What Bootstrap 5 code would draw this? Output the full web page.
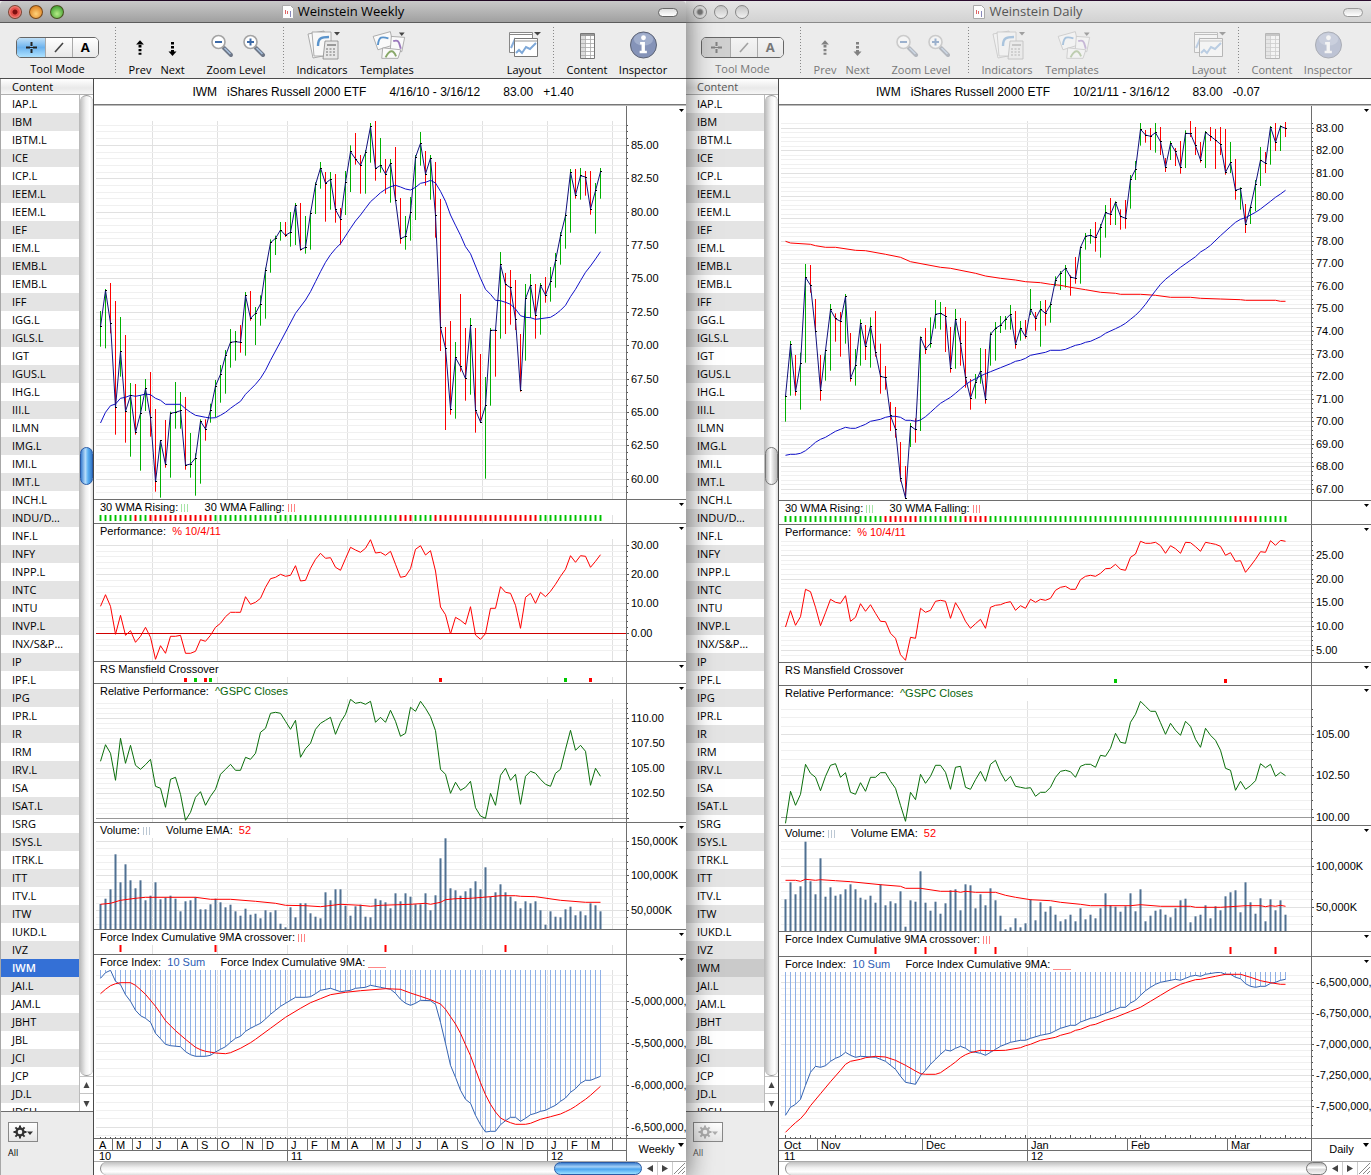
<!DOCTYPE html>
<html lang="en">
<head>
<meta charset="utf-8">
<meta name="viewport" content="width=device-width, initial-scale=1">
<title>Weinstein Weekly / Weinstein Daily</title>
<link href="https://cdn.jsdelivr.net/npm/bootstrap@5.3.0/dist/css/bootstrap.min.css" rel="stylesheet">
<style>
  :root { --ui: "Open Sans", "Noto Sans", sans-serif; --plot: "Liberation Sans", Arial, sans-serif; --rule: #6e6e6e; }
  body { font: 11px/15px var(--ui); color: #000; background: #2a0a2e; }
  .desk { height: 100vh; min-height: 1175px; padding-top: 1px; }
  .win { flex: 1 1 0; min-width: 0; background: #ececec; position: relative; z-index: 2; }
  .win-front { box-shadow: 0 4px 26px rgba(0,0,0,.6); }
  .win-back { margin-left: -1px; z-index: 1; overflow: hidden; }
  .titlebar { height: 22px; border-bottom: 1px solid #5c5c5c; background: linear-gradient(#c9c9c9, #a0a0a0); font-size: 13px; border-radius: 4px 4px 0 0; }
  .win-back .titlebar { background: linear-gradient(#e6e6e6, #d2d2d2); border-color: #8a8a8a; color: #555; }
  .lights { position: absolute; left: 8px; top: 4px; gap: 7px; }
  .lights i { width: 14px; height: 14px; border-radius: 50%; border: 1px solid rgba(60,30,10,.65); }
  .l-red { background: radial-gradient(circle, #7c0f0f 0 2px, #e4504a 3px 4px, #ffb0a4 7px); }
  .l-amber { background: radial-gradient(circle at 50% 65%, #ffd27a, #e08a2c 70%); }
  .l-green { background: radial-gradient(circle at 50% 65%, #b6ec86, #4fa83c 70%); }
  .win-back .lights i { background: linear-gradient(#c4c4c4, #f0f0f0); border-color: #888; }
  .win-back .lights .l-red { background: radial-gradient(circle, #777 0 2px, #dcdcdc 4px); }
  .pill { position: absolute; right: 8px; top: 7px; width: 20px; height: 9px; border: 1px solid #666; border-radius: 5px; background: linear-gradient(#ddd, #fff); padding: 0; }
  .win-back .pill { border-color: #999; }
  .tools { height: 56px; border-bottom: 1px solid #4c4c4c; font-size: 11px; }
  .win-back .tools { color: #777; }
  .win-back .tools svg { opacity: .45; }
  .tool { border: 0; background: none; padding: 0; color: inherit; line-height: 15px; text-align: center; white-space: nowrap; }
  .tool svg { display: block; margin: 4px auto 0; height: 34px; }
  .dots { width: 1px; margin: 4px 0 3px; background: repeating-linear-gradient(#888 0 1px, transparent 1px 3px); }
  .modes { margin: 14px 0 3px; border: 1px solid #666; border-radius: 5px; overflow: hidden; height: 21px; }
  .modes button { flex: 1; border: 0; border-left: 1px solid #aaa; background: linear-gradient(#fff, #e8e8e8); padding: 0; color: inherit; font-size: 13px; line-height: 19px; }
  .modes button:first-child { border-left: 0; background: linear-gradient(#bfe0f8, #6db3ee 50%, #aee2ff); }
  .win-back .modes button { background: linear-gradient(#f4f4f4, #e8e8e8); }
  .win-back .modes button:first-child { background: #d0d0d0; }
  .modes svg { display: block; height: 19px; margin: 0 auto; }
  .side { flex: 0 0 94px; border-right: 1px solid #4a4a4a; border-left: 1px solid #a8a8a8; }
  .side-head { height: 16px; border-bottom: 1px solid #b0b0b0; background: linear-gradient(#fff, #e9e9e9 60%, #f6f6f6); padding-left: 11px; }
  .win-back .side-head { color: #555; }
  .names { background: #fff; overflow: hidden; }
  .names .list-group-item { border: 0; border-radius: 0; background: transparent; color: #000; padding: 0 0 0 11px; height: 18px; line-height: 18px; white-space: nowrap; flex: none; }
  .names .list-group-item:nth-child(even) { background: #e4e4e4; }
  .names .list-group-item.active { background: #3470d6; color: #fff; font-weight: 600; margin: 0; }
  .win-back .names .list-group-item.active { background: #cacaca; color: #000; font-weight: 400; }
  .vbar { flex: 0 0 14px; border-left: 1px solid #bbb; background: #fff; }
  .vtrack { border-radius: 7px; background: linear-gradient(90deg, #bcbcbc, #f0f0f0 45%, #fff 75%, #ddd); border: solid #999; border-width: 1px 0; }
  .knob { border-radius: 7px; background: linear-gradient(90deg, #3c7fd0, #b5dcfb 40%, #57aef2 65%, #3578c8); border: 1px solid #2a5ba6; }
  .win-back .knob { background: linear-gradient(90deg, #b5b5b5, #fff 40%, #dedede 65%, #bbb); border-color: #777; }
  .arrow { border-top: 1px solid #c4c4c4; flex: 0 0 16px; }
  .side-foot { height: 64px; border-top: 1px solid #6e6e6e; padding: 10px 0 0 7px; font-size: 9px; }
  .gear { display: block; width: 30px; height: 20px; border: 1px solid #888; background: linear-gradient(#fff, #e6e6e6); padding: 0; margin-bottom: 3px; }
  .gear svg { display: block; }
  .win-back .gear svg { opacity: .35; }
  .win-back .side-foot { color: #555; }
  .quote { height: 27px; background: #fff; font: 12px/26px var(--plot); border-bottom: 1px solid #bbb; box-shadow: inset 0 -1px #777; padding-right: 14px; }
  .charts { background: #fff; font-family: var(--plot); min-width: 0; }
  .pane { border-bottom: 1px solid var(--rule); }
  .plotarea { min-width: 0; }
  .caption { height: 15px; line-height: 15px; padding-left: 6px; white-space: pre; overflow: hidden; }
  .pane svg { display: block; }
  .plotarea svg { width: 100%; }
  .scale { flex: 0 0 60px; border-left: 1px solid var(--rule); overflow: hidden; }
  .scale text { font: 11px var(--plot); }
  .key { display: inline-block; width: 7px; height: 8px; margin-right: 1px; vertical-align: -1px; background: repeating-linear-gradient(90deg, currentColor 0 1px, transparent 1px 3px); opacity: .5; }
  .under { display: inline-block; width: 18px; height: 9px; border-bottom: 1px solid #f88; vertical-align: -2px; }
  .t-red { color: #f00; } .t-green { color: #0a640a; } .t-blue { color: #2c5cb4; } .t-lime { color: #4cc84c; } .t-steel { color: #7890a8; }
  .months { height: 12px; line-height: 12px; border-bottom: 1px solid var(--rule); }
  .years { height: 10px; line-height: 11px; }
  .months span, .years span { flex: none; padding-left: 3px; border-left: 1px solid var(--rule); overflow: hidden; }
  .months span:first-child, .years span:first-child { border-color: transparent; padding-left: 4px; }
  .period { flex: 0 0 60px; border-left: 1px solid var(--rule); line-height: 21px; position: relative; text-align: center; }
  .period svg { position: absolute; right: 2px; top: 4px; }
  .hbar { height: 14px; background: #fff; border-top: 1px solid #aaa; }
  .htrack { border-radius: 7px; background: linear-gradient(#c0c0c0, #f2f2f2 45%, #fff 75%, #ddd); margin-left: 6px; border-left: 1px solid #888; }
  .htrack .knob { background: linear-gradient(#3c7fd0, #a5d2f8 35%, #4aa4f0 55%, #9be0ff); }
  .win-back .htrack .knob { background: linear-gradient(#b0b0b0, #fff 40%, #dcdcdc 60%, #f4f4f4); }
</style>
<script src="https://cdn.jsdelivr.net/npm/bootstrap@5.3.0/dist/js/bootstrap.bundle.min.js"></script>
</head>
<body>
<svg width="0" height="0" class="position-absolute" aria-hidden="true">
  <symbol id="i-doc" viewBox="0 0 12 14"><path d="M.5.5h8l3 3v10H.5z" fill="#fdfdfd" stroke="#aaa"/><path d="M3.500 5v4M5.500 6v3" stroke="#d66"/><path d="M8.500 6v6" stroke="#88b"/></symbol>
  <symbol id="i-cross" viewBox="0 0 28 19"><path d="M14.500 4v4M14.500 11v4M9 9.500h4M16 9.500h4" stroke="#222" stroke-width="2"/><path d="M13 9.500h3" stroke="#222"/></symbol>
  <symbol id="i-line" viewBox="0 0 24 19"><path d="M8 14l8-9" stroke="#444" stroke-width="1.600"/></symbol>
  <symbol id="i-prev" viewBox="0 0 33 34"><path d="M16.500 12l4 4.500h-8z"/><path d="M16.500 17v10" stroke="#000" stroke-width="3" stroke-dasharray="2.500 1.500"/></symbol>
  <symbol id="i-next" viewBox="0 0 33 34"><path d="M16.500 28l4-4.500h-8z"/><path d="M16.500 14v10" stroke="#000" stroke-width="3" stroke-dasharray="2.500 1.500"/></symbol>
  <symbol id="i-zoom" viewBox="0 0 70 34">
    <g id="lens"><path d="M23 20l7 7" stroke="#6d7686" stroke-width="4" stroke-linecap="round"/><path d="M23.500 20l6 6" stroke="#a8c0dc" stroke-width="1.500"/><circle cx="17.500" cy="14" r="6.500" fill="#fff" stroke="#a4a4a4" stroke-width="1.600"/><path d="M14 14h7" stroke="#3c6aa8" stroke-width="2"/></g>
    <use href="#lens" x="32"/><path d="M49.500 10.500v7" stroke="#3c6aa8" stroke-width="2"/></symbol>
  <symbol id="i-ind" viewBox="0 0 60 34">
    <g fill="#f8f8f8" stroke="#999" stroke-width=".8"><path d="M16 6l16-3 4 24-15 3z"/><path d="M20 4h19v24H22z"/></g>
    <path d="M26 18c0-8 3-9 11-9" fill="none" stroke="#5b94cc" stroke-width="2.400"/>
    <path d="M33 13h13v18H31z" fill="#e8e8e8" stroke="#888" stroke-width=".8"/><path d="M35 17h9" stroke="#999" stroke-width="2"/>
    <path d="M34 21h10M34 24h10M34 27h10" stroke="#999" stroke-dasharray="2 1.500" stroke-width="1.500"/><path d="M42 4h6l-3 3.500z" fill="#444"/></symbol>
  <symbol id="i-tpl" viewBox="0 0 65 34">
    <g fill="#fafafa" stroke="#999" stroke-width=".8"><path d="M18 8l18-5 3 14-16 5z"/><path d="M37 8l14 1-3 15-12-2z"/><path d="M28 20l19 2-3 9H27z"/></g>
    <path d="M23 17c1-9 4-9 11-7" fill="none" stroke="#5b94cc" stroke-width="2"/><path d="M39 13c6-2 6 1 8 8" fill="none" stroke="#9a78bc" stroke-width="2"/><path d="M31 30c4-8 8-9 11-1" fill="none" stroke="#88a868" stroke-width="2"/><path d="M45 4h6l-3 3.500z" fill="#444"/></symbol>
  <symbol id="i-lay" viewBox="0 0 40 34">
    <g fill="#fff" stroke="#888"><path d="M5.500 4.500h23v20h-23z"/><path d="M5.500 6.500h23"/></g><path d="M7 20l4-9 3 2" fill="none" stroke="#88aedb" stroke-width="2"/>
    <path d="M10.500 10.500h23v18h-23z" fill="#fff" stroke="#777"/><path d="M10.500 13h23" stroke="#999"/><path d="M12 25l3-3 3 3 4-6 4 2 6-6" fill="none" stroke="#7ea8d8" stroke-width="2"/><path d="M30 4h7l-3.500 3.500z" fill="#444"/></symbol>
  <symbol id="i-con" viewBox="0 0 44 34"><path d="M15.500 5.500h14v25h-14z" fill="#fff" stroke="#777"/><path d="M16 7h13" stroke="#999" stroke-width="2"/><path d="M16 8h4v22h-4z" fill="#ddd"/><path d="M16 11.500h13M16 15.500h13M16 19.500h13M16 23.500h13M16 27.500h13M20.500 8v22M25.500 8v22" stroke="#aaa" stroke-width=".8"/></symbol>
  <symbol id="i-insp" viewBox="0 0 56 34"><circle cx="28.500" cy="17" r="13.500" fill="#8593b8" stroke="#5a6070"/><ellipse cx="28.500" cy="11" rx="10" ry="6.500" fill="#b4bfd8" opacity=".6"/><circle cx="28.500" cy="9.500" r="2.500" fill="#fff"/><path d="M25 14h5v9h2v2.500h-7.500V23h2v-6.500H25z" fill="#fff"/></symbol>
  <symbol id="i-gear" viewBox="0 0 28 18"><circle cx="11" cy="9" r="3.500" fill="none" stroke="#333" stroke-width="2.400"/><path d="M11 2.500v3M11 12.500v3M4.500 9h3M14.500 9h3M6.400 4.400l2 2M13.600 11.600l2 2M15.600 4.400l-2 2M6.400 13.600l2-2" stroke="#333" stroke-width="2"/><path d="M18 8.500h6l-3 3.500z" fill="#333"/></symbol>
  <symbol id="i-grip" viewBox="0 0 14 13"><path d="M2 12L13 1M6 12l7-7M10 12l3-3" stroke="#888"/></symbol>
</svg>

<main class="desk d-flex" id="desk"></main>

<template id="windowTpl">
  <section class="win d-flex flex-column">
    <header class="titlebar d-flex align-items-center justify-content-center position-relative flex-shrink-0">
      <div class="lights d-flex"><i class="l-red"></i><i class="l-amber"></i><i class="l-green"></i></div>
      <svg width="12" height="14" class="me-1"><use href="#i-doc"/></svg><span data-title></span>
      <button class="pill" aria-label="Toggle toolbar"></button>
    </header>
    <div class="tools d-flex flex-shrink-0 px-3">
      <div class="text-center" style="width:83px">
        <div class="modes d-flex"><button aria-label="Crosshair"><svg width="28"><use href="#i-cross"/></svg></button><button aria-label="Line"><svg width="24"><use href="#i-line"/></svg></button><button class="fw-bold" aria-label="Text tool">A</button></div>
        Tool Mode</div>
      <div class="dots ms-3 me-2"></div>
      <button class="tool" style="width:32px"><svg width="32"><use href="#i-prev"/></svg>Prev</button>
      <button class="tool" style="width:33px"><svg width="33"><use href="#i-next"/></svg>Next</button>
      <button class="tool ms-2" style="width:78px"><svg width="70"><use href="#i-zoom"/></svg>Zoom Level</button>
      <div class="dots ms-2 me-2"></div>
      <button class="tool" style="width:60px"><svg width="60"><use href="#i-ind"/></svg>Indicators</button>
      <button class="tool ms-1" style="width:62px"><svg width="62"><use href="#i-tpl"/></svg>Templates</button>
      <button class="tool ms-auto" style="width:42px"><svg width="40"><use href="#i-lay"/></svg>Layout</button>
      <div class="dots ms-2 me-2"></div>
      <button class="tool" style="width:50px"><svg width="44"><use href="#i-con"/></svg>Content</button>
      <button class="tool ms-1" style="width:54px"><svg width="54"><use href="#i-insp"/></svg>Inspector</button>
    </div>
    <div class="d-flex flex-grow-1" style="min-height:0">
      <aside class="side d-flex flex-column">
        <div class="side-head flex-shrink-0">Content</div>
        <div class="d-flex flex-grow-1" style="min-height:0">
          <nav class="names list-group rounded-0 flex-grow-1" data-names></nav>
          <div class="vbar d-flex flex-column">
            <div class="vtrack d-flex flex-column flex-grow-1"><div style="flex:352"></div><div class="knob" style="height:38px"></div><div style="flex:592"></div></div>
            <div class="arrow"><svg width="13" height="15"><path d="M3.500 10h6l-3-6z" fill="#444"/></svg></div>
            <div class="arrow"><svg width="13" height="15"><path d="M3.500 5h6l-3 6z" fill="#444"/></svg></div>
          </div>
        </div>
        <div class="side-foot flex-shrink-0"><button class="gear" aria-label="Actions"><svg width="28" height="18"><use href="#i-gear"/></svg></button>All</div>
      </aside>
      <div class="charts flex-grow-1 d-flex flex-column">
        <div class="quote d-flex justify-content-center flex-shrink-0" data-quote></div>
        <div data-panes></div>
        <div class="d-flex flex-shrink-0">
          <div class="plotarea flex-grow-1"><div class="months d-flex" data-months></div><div class="years d-flex" data-years></div></div>
          <div class="period"><span data-period></span><svg width="6" height="4"><path d="M0 0h6L3 4z"/></svg></div>
        </div>
        <div class="hbar d-flex flex-shrink-0">
          <div class="htrack flex-grow-1 d-flex justify-content-end"><div class="knob" data-thumb></div></div>
          <svg width="44" height="13"><path d="M11 3v7L5 6.500zM20 3v7l6-3.500z" fill="#444"/><path d="M15.500 0v13M30.500 0v13" stroke="#ccc"/><use href="#i-grip" x="30" width="14" height="13"/></svg>
        </div>
      </div>
    </div>
  </section>
</template>

<script>
const W = 532, STEP = 5, X0 = 6;
const symbols = "IAP.L IBM IBTM.L ICE ICP.L IEEM.L IEEM.L IEF IEM.L IEMB.L IEMB.L IFF IGG.L IGLS.L IGT IGUS.L IHG.L III.L ILMN IMG.L IMI.L IMT.L INCH.L INDU/D… INF.L INFY INPP.L INTC INTU INVP.L INX/S&P… IP IPF.L IPG IPR.L IR IRM IRV.L ISA ISAT.L ISRG ISYS.L ITRK.L ITT ITV.L ITW IUKD.L IVZ IWM JAI.L JAM.L JBHT JBL JCI JCP JD.L JDSU".split(" ");

/* Series levels are kept in thirds of a unit below each pane's origin.
   Price bars: high, low, close, direction. Averages: index:level pairs. */
const weekly = {
  title: "Weinstein Weekly", front: true, period: "Weekly", thumb: 88,
  quote: ["IWM", "iShares Russell 2000 ETF", "4/16/10 - 3/16/12", "83.00", "+1.40"],
  vlines: [58,123,193,253,318,388,453,518],
  months: [[0,"A"],[18,"M"],[38,"J"],[58,"J"],[83,"A"],[103,"S"],[123,"O"],[148,"N"],[168,"D"],[193,"J"],[213,"F"],[233,"M"],[253,"A"],[278,"M"],[298,"J"],[318,"J"],[343,"A"],[363,"S"],[388,"O"],[408,"N"],[428,"D"],[453,"J"],[473,"F"],[493,"M"],[518,""]],
  years: [[0,"10"],[193,"11"],[453,"12"]],
  edges: [106,500,524,662,684,823,930,955,1139],
  bars: "633 740 680 g,567 745 571 g,549 700 670 r,603 1004 922 r,651 830 754 g,705 1028 934 r,849 1070 887 g,852 1004 997 r,885 1112 940 g,837 933 866 g,816 1010 952 r,927 1175 1145 r,1022 1193 1022 g,960 1103 1094 r,935 1133 940 g,846 986 937 g,876 986 932 g,891 1109 1096 r,999 1133 1092 g,1060 1187 1074 g,958 1151 964 g,958 1022 987 r,911 968 930 g,840 952 858 g,795 908 823 g,750 881 767 g,687 803 727 g,693 782 725 g,675 758 727 r,576 767 587 g,573 662 655 r,621 735 640 g,586 677 612 g,503 656 510 g,418 518 428 g,407 465 415 g,366 422 390 g,366 411 406 r,336 440 397 g,309 435 315 g,309 452 449 r,348 461 442 g,332 449 340 g,247 342 254 g,186 266 204 g,216 365 250 r,216 329 238 g,222 368 329 r,324 434 357 r,213 345 247 g,136 276 155 g,99 194 177 r,165 281 196 r,150 281 158 g,69 188 80 g,63 242 206 r,114 218 196 g,177 281 222 r,177 308 190 g,141 304 301 r,294 431 416 r,348 449 409 g,291 422 338 g,165 360 172 g,96 197 130 g,153 257 222 r,165 299 174 g,186 413 346 r,297 753 683 r,681 990 745 r,663 944 927 r,726 956 773 g,582 815 800 r,684 902 836 r,654 884 677 g,684 998 931 r,762 968 966 r,831 1136 917 g,684 917 691 g,691 830 691 r,456 716 494 g,519 702 553 r,510 674 563 r,540 690 658 r,702 875 872 r,552 782 596 g,522 654 556 g,552 716 646 r,549 704 556 g,531 608 585 r,501 605 545 g,459 563 482 g,396 494 407 g,340 446 347 g,207 398 217 g,207 296 286 r,204 299 227 g,213 287 231 r,213 344 327 r,249 401 272 g,204 296 215 g",
  ma: "0:969,1:937,2:917,3:912,4:895,5:892,6:886,7:889,8:886,9:882,10:884,11:895,12:901,13:913,16:913,17:926,18:937,19:946,21:952,22:954,23:953,24:946,25:937,26:925,27:914,28:904,29:883,30:868,31:853,32:835,33:811,34:781,36:725,39:640,41:600,42:575,43:545,44:515,45:487,46:464,47:446,48:431,50:385,51:363,52:345,53:325,54:305,55:292,56:278,57:268,58:260,59:256,60:261,61:267,62:270,63:262,64:250,65:247,66:241,67:249,68:274,69:304,70:345,71:376,72:406,73:440,74:461,75:498,76:535,77:568,78:583,79:601,80:602,81:607,82:613,83:627,84:647,85:652,86:653,87:658,88:656,90:652,91:643,92:631,93:616,94:590,95:568,96:542,97:517,98:498,99:477,100:455",
  falling: [[7,7],[10,22],[60,62],[67,87]],
  perf: "319,284,319,403,346,406,392,427,409,382,412,478,437,460,409,409,406,460,460,454,419,424,406,382,370,350,337,337,337,290,313,307,295,262,236,232,223,229,226,197,243,241,205,178,160,175,173,202,211,176,142,150,157,145,119,159,157,166,154,193,232,229,206,148,137,165,152,213,321,344,402,352,361,373,320,405,418,401,325,325,260,277,280,316,385,292,280,310,277,290,274,253,229,208,167,187,167,169,202,184,164",
  rs: [[17,"r"],[19,"g"],[21,"r"],[22,"g"],[68,"r"],[93,"g"],[98,"r"]],
  rel: "784,734,760,841,715,790,736,796,808,794,778,859,865,922,838,832,883,961,937,892,875,916,889,868,823,808,793,811,811,772,778,760,697,685,640,637,640,664,688,661,772,746,730,688,670,661,652,703,667,643,598,610,607,613,604,667,652,667,631,664,709,700,622,634,604,625,650,692,808,823,880,847,871,862,844,923,948,955,880,916,826,805,841,823,913,829,814,820,838,853,859,820,808,748,691,751,736,754,856,805,829",
  vol: "252,236,208,103,187,133,181,205,181,241,227,187,238,233,227,236,274,244,241,232,268,268,253,236,247,262,254,274,287,266,284,281,295,271,277,271,311,322,262,292,250,250,280,290,295,217,241,208,208,257,287,259,254,290,292,236,241,247,265,220,244,220,230,253,253,220,271,226,115,55,205,211,227,214,205,184,208,142,230,217,193,217,230,244,265,244,250,244,271,314,274,290,292,268,260,286,274,286,250,256,274",
  ema: "0:253,2:250,4:241,7:235,9:232,19:232,22:238,26:238,31:244,35:250,37:256,41:257,44:260,48:253,52:256,54:259,56:256,62:253,65:250,66:253,68:247,69:239,71:236,74:235,78:230,80:227,83:227,84:229,87:230,92:241,97:247,100:247",
  cross: [4,23,57,81],
  force: "0:475,1:458,2:451,3:484,4:494,5:524,6:544,7:571,8:587,9:595,10:607,11:640,12:656,13:673,14:677,16:680,17:695,18:704,19:709,21:709,22:706,23:696,24:688,25:680,26:667,27:655,28:649,29:634,30:625,31:617,32:610,33:597,34:583,35:571,36:559,37:550,38:541,39:532,41:532,42:530,43:521,44:511,46:505,48:515,50:511,51:505,53:502,54:496,56:502,58:508,59:520,60:538,61:550,62:556,63:550,64:541,66:542,67:553,68:607,69:670,70:736,71:772,72:811,73:838,74:850,75:886,76:914,77:936,78:934,79:934,80:914,81:902,82:892,83:892,84:904,85:895,86:884,87:880,88:874,89:871,90:863,91:856,92:844,93:834,94:817,95:806,96:790,97:781,98:781,99:775,100:769",
  sum: "0:521,1:508,2:497,3:491,4:488,6:488,7:496,8:509,9:523,10:541,11:559,12:580,13:602,14:617,15:632,17:658,18:670,19:682,20:689,21:694,23:699,25:701,26:698,28:685,30:668,31:658,34:625,37:592,40:565,42:548,44:536,46:524,49:517,52:512,57:506,60:508,62:519,64:529,66:539,68:552,69:568,70:590,71:612,72:640,73:674,74:707,75:748,76:788,77:824,78:853,79:876,80:894,81:902,82:908,83:913,85:913,86:910,88:898,90:890,92:882,93:875,94:868,95:859,96:848,97:838,98:826,100:799",
  /* hi/lo/at are counted in minor steps; y is the level of "at", k the height of one step */
  grids: {
    price: { hi: 173, lo: 118, major: 5, at: 170, y: 100 + 136/3, k: 20.04/3, fmt: v => (v/2).toFixed(2) },
    perf: { hi: 15, lo: -3, major: 5, at: 0, y: 500 + 400/3, k: 17.64/3, fmt: v => (v*2).toFixed(2), zero: 0, zc: "#d00000" },
    rel: { hi: 223, lo: 200, major: 5, at: 220, y: 500 + 655/3, k: 5, fmt: v => v > 200 ? (v/2).toFixed(2) : "", zero: 200, zc: "#999" },
    vol: { hi: 15, lo: 3, major: 5, at: 15, y: 820 + 64/3, k: 6.93, fmt: v => v*10 + ",000K" },
    force: { hi: -47, lo: -66, major: 5, at: -50, y: 820 + 543/3, k: 8.42, fmt: v => "-" + (-v/10).toFixed(1).replace(".", ",") + "00,000," }
  },
  majorTicks: []
};
const daily = {
  title: "Weinstein Daily", front: false, period: "Daily", thumb: 21,
  quote: ["IWM", "iShares Russell 2000 ETF", "10/21/11 - 3/16/12", "83.00", "-0.07"],
  vlines: [248],
  months: [[0,"Oct"],[38,"Nov"],[143,"Dec"],[248,"Jan"],[348,"Feb"],[448,"Mar"]],
  years: [[0,"11"],[248,"12"]],
  edges: [106,501,525,663,686,826,932,957,1139],
  bars: "886 965 889 g,723 887 734 g,765 887 875 r,758 929 791 g,492 788 532 g,495 578 556 r,597 695 694 r,765 902 871 r,750 842 751 g,612 812 629 g,640 725 656 r,636 770 664 r,582 731 590 g,699 845 835 r,747 857 797 g,658 797 670 g,675 780 740 r,652 803 679 g,633 770 757 r,731 881 829 r,798 869 833 r,906 993 947 r,921 1013 988 r,1026 1145 1136 r,1098 1195 1194 r,969 1041 978 g,955 1028 989 r,709 993 712 g,684 762 747 r,652 743 730 g,600 686 643 g,606 689 640 g,621 756 648 r,681 818 804 r,627 806 658 g,654 797 730 r,663 863 833 r,837 929 894 r,822 896 848 g,744 851 813 g,747 911 898 r,697 797 703 g,666 782 685 g,648 699 676 g,648 689 658 g,615 689 643 g,633 746 733 r,663 722 685 g,660 716 710 r,567 645 628 g,636 692 656 r,603 740 628 g,600 677 640 r,607 668 614 g,529 558 540 g,513 570 519 g,495 563 505 g,526 587 531 r,471 551 535 r,440 551 442 g,399 449 409 g,387 431 406 g,366 455 413 r,372 473 381 g,315 413 338 g,294 375 343 r,304 375 307 g,328 389 349 r,300 386 355 r,225 326 238 g,183 240 208 g,69 137 88 g,90 128 105 r,84 150 109 r,69 158 98 g,81 165 125 r,174 216 202 r,123 180 130 g,144 198 155 r,123 221 202 r,91 204 100 g,63 111 101 r,81 165 137 r,126 188 180 r,93 204 97 g,81 123 109 r,87 207 120 r,81 165 133 r,87 224 217 r,126 219 188 g,177 299 271 r,262 329 266 g,312 399 373 r,316 372 321 g,240 334 253 g,141 258 180 g,156 219 190 r,78 194 81 g,69 153 127 r,76 153 79 g,66 111 85 r",
  ma: "0:1066,1:1063,2:1063,3:1060,4:1052,5:1040,6:1027,7:1018,8:1012,9:1003,10:994,11:988,12:982,13:985,14:985,15:979,16:973,17:964,19:958,20:952,21:949,22:949,23:952,24:961,25:961,26:964,27:960,28:950,29:937,30:923,31:910,32:901,33:892,34:880,35:867,36:854,37:844,38:836,39:828,40:821,41:815,43:803,45:791,46:784,47:781,48:775,49:766,52:757,53:751,55:751,56:748,57:742,58:736,59:733,60:727,61:724,62:717,63:710,64:700,66:686,67:679,68:670,69:658,70:646,71:631,72:613,73:592,74:572,75:553,76:538,77:526,79:502,82:470,83:456,84:447,85:436,87:407,89:380,90:367,91:358,92:353,94:337,95:327,97:304,98:292,99:282,100:271",
  ma2: "0:424,1:429,5:433,6:437,8:442,10:442,14:451,16:452,20:463,23:472,25:485,31:502,33:505,38:520,40:528,43:535,46:540,48:545,51:548,53:553,55:556,57:562,60:569,63:577,66:580,67:583,71:583,74:586,77:592,81:592,83:595,87:597,91:599,92:601,98:601,99:604,100:604",
  falling: [[20,26],[33,33],[36,40],[90,94]],
  perf: "381,332,376,350,268,275,322,377,338,298,307,310,287,364,352,311,334,314,340,364,365,400,415,464,481,412,415,325,337,331,304,301,304,355,308,332,364,385,371,358,385,322,316,314,308,305,331,317,325,298,307,298,301,295,271,262,259,268,268,239,229,226,229,220,206,205,193,208,211,172,162,124,130,130,127,137,160,137,146,160,127,128,140,154,127,130,133,139,166,158,184,182,217,198,178,155,157,122,136,121,124",
  rs: [[66,"g"],[88,"r"]],
  rel: "970,874,916,883,793,820,832,872,829,796,791,832,818,877,883,848,874,832,832,818,818,844,865,916,964,877,899,823,850,829,796,796,817,868,802,799,862,868,839,814,844,793,781,817,844,829,859,862,865,863,889,877,877,862,832,814,811,815,832,799,793,793,802,766,769,745,700,727,730,667,643,604,619,634,634,668,703,670,691,706,664,679,718,742,685,706,721,751,805,811,871,844,868,857,842,791,803,793,829,817,827",
  vol: "238,187,223,199,65,184,223,115,230,202,227,223,208,193,208,233,239,227,248,193,256,244,250,214,320,241,245,154,248,272,245,281,250,211,208,271,193,196,265,223,256,205,241,287,328,322,295,322,310,238,301,247,275,259,284,304,298,284,304,265,298,284,295,265,220,256,260,275,259,220,274,208,304,287,272,268,284,292,265,241,236,307,289,284,256,295,259,271,229,217,211,277,187,247,281,235,304,238,271,241,284",
  ema: "0:181,2:181,3:184,4:178,6:181,7:179,10:182,13:185,19:194,23:199,24:205,27:205,31:214,34:214,35:217,36:214,38:217,42:217,44:226,46:232,49:239,53:242,55:247,59:253,61:257,69:257,71:254,75:259,81:259,82:262,87:262,89:260,92:257,95:257,96:260,97:257,98:259,99:256,100:259",
  cross: [18,28,38,42,89,98],
  force: "0:886,1:862,2:853,3:838,4:796,5:757,6:739,7:742,8:737,9:724,10:715,11:709,12:697,13:706,14:712,15:709,18:712,20:724,22:748,23:769,24:787,26:793,27:767,28:751,29:733,30:718,31:703,32:690,33:693,34:685,35:679,36:685,37:695,38:697,39:700,40:706,41:697,42:688,43:679,45:667,47:661,48:661,49:655,51:646,53:640,54:632,55:625,57:616,58:616,59:606,61:595,62:592,66:568,67:562,68:562,69:549,70:541,71:526,72:512,73:502,74:493,75:487,78:478,79:481,80:475,81:469,82:466,83:469,84:463,86:458,87:457,88:463,89:463,90:472,91:476,92:491,93:499,94:502,95:499,96:499,97:490,98:487,99:481,100:478",
  sum: "0:937,1:922,2:908,3:896,4:879,5:857,7:821,9:785,11:751,12:733,13:724,15:718,16:713,18:709,20:711,22:721,24:736,26:753,27:761,28:763,30:763,31:758,33:737,34:726,35:713,36:704,37:698,39:691,41:692,44:691,47:683,48:677,49:673,51:661,54:652,55:646,57:638,58:631,59:628,61:616,62:613,64:601,66:592,69:574,71:562,73:544,75:526,77:508,79:493,80:488,82:479,83:478,86:469,88:463,91:463,93:472,95:482,97:488,99:493,100:493",
  grids: {
    price: { hi: 416, lo: 334, major: 5, at: 415, y: 100 + 85/3, k: 13.54/3, fmt: v => (v/5).toFixed(2) },
    perf: { hi: 28, lo: 4, major: 5, at: 25, y: 500 + 166/3, k: 4.75, fmt: v => v.toFixed(2) },
    rel: { hi: 213, lo: 200, major: 5, at: 210, y: 500 + 703/3, k: 8.3, fmt: v => (v/2).toFixed(2), zero: 200, zc: "#999" },
    vol: { hi: 13, lo: 3, major: 5, at: 10, y: 820 + 139/3, k: 8.33, fmt: v => v*10 + ",000K" },
    force: { hi: -129, lo: -153, major: 5, at: -130, y: 820 + 486/3, k: 6.22, fmt: v => "-" + (-v/20).toFixed(2).replace(".", ",") + "0,000," }
  },
  majorTicks: [0,5,10,15,20,24,29,34,39,44,48,53,57,61,66,71,76,81,86,90,95,100]
};

const num = s => s.split(",").map(Number);
const pairs = s => s.split(",").map(p => p.split(":").map(Number));
const cx = i => X0 + .5 + STEP * i;
const path = (pts, base, color, w = 1) =>
  `<polyline fill="none" stroke="${color}" stroke-width="${w}" points="${pts.map(([i, v]) => cx(i) + "," + (base + v/3).toFixed(1)).join(" ")}"/>`;
const box = (x, y, w, h, f) => `<rect x="${x}" y="${y}" width="${w}" height="${h}" fill="${f}"/>`;
const indexed = a => a.map((v, i) => [i, v]);
const gridRows = g => { const r = []; for (let v = g.hi; v >= g.lo; v--) r.push([v, Math.round(g.y - (v - g.at) * g.k - .5), v % g.major === 0]); return r; };
const gridSvg = g => gridRows(g).map(([v, y, m]) => box(2, y, W - 2, 1, v === g.zero ? g.zc : m ? "#e1e1e1" : "#f0f0f0")).join("");
const interp = pts => { const out = []; for (let k = 0; k < pts.length - 1; k++) { const [a, p] = pts[k], [b, q] = pts[k+1]; for (let i = a; i < b; i++) out[i] = p + (q - p) * (i - a) / (b - a); } out[100] = pts.at(-1)[1]; return out; };
const HEX = { g: "#00b000", r: "#ff0000" };

function panes(d) {
  const e = d.edges;
  const bars = d.bars.split(",").map(b => b.split(" "));
  const isRed = i => d.falling.some(([a, b]) => i >= a && i <= b);
  const price = bars.map(([h, l, , c], i) => box(X0 + STEP*i, 100 + h/3, 1, (l - h)/3, HEX[c])).join("")
    + (d.ma2 ? path(pairs(d.ma2), 100, "#f00") : "") + path(pairs(d.ma), 100, "#1010c8")
    + path(bars.map((b, i) => [i, +b[2]]), 100, "#10107c")
    + bars.map((b, i) => box(X0 + STEP*i, Math.floor(100 + b[2]/3), 2, 1, "#000")).join("");
  const y1 = e[1] + 15, y3 = e[3] + 15, y6 = e[6] + 15;
  const strip = bars.map((b, i) => { const r = isRed(i), x = X0 + STEP*i; return box(x - 1, y1, 3, 6, r ? "#ff8080" : "#8ae68a") + box(x, y1, 1, 6, r ? "#f00000" : "#00c000"); }).join("");
  const rs = d.rs.map(([i, c]) => box(X0 - 1 + STEP*i, y3 + 1, 3, 4, c === "g" ? "#00c800" : "#f00")).join("");
  const bottom = e[6] - 1;
  const vol = num(d.vol).map((v, i) => box(X0 - .5 + STEP*i, (820 + v/3).toFixed(1), 2, (bottom - 820 - v/3).toFixed(1), "#4f7092")).join("") + path(pairs(d.ema), 820, "#f00");
  const cross = d.cross.map(i => box(X0 - .5 + STEP*i, y6, 2, 7, "#f00")).join("");
  const fp = pairs(d.force);
  const force = interp(fp).map((v, i) => box(X0 + STEP*i, e[7] + 15, 1, (820 + v/3 - e[7] - 15).toFixed(1), "#8fb0e6")).join("")
    + path(fp, 820, "#3563b0") + path(pairs(d.sum), 820, "#f00")
    + Array.from({ length: 105 }, (_, i) => { const h = d.majorTicks.includes(i) ? 3 : 1; return box(X0 + STEP*i, e[8] - 1 - h, 1, h, "#555"); }).join("");
  const g = d.grids;
  return [
    ["", g.price, price],
    [`30 WMA Rising: <i class="key t-lime"></i>     30 WMA Falling: <i class="key t-red"></i>`, null, strip],
    [`Performance:  <span class="t-red">% 10/4/11</span>`, g.perf, path(indexed(num(d.perf)), 500, "#f00")],
    [`RS Mansfield Crossover`, null, rs],
    [`Relative Performance:  <span class="t-green">^GSPC Closes</span>`, g.rel, path(indexed(num(d.rel)), 500, "#0a6e0a")],
    [`Volume: <i class="key t-steel"></i>     Volume EMA:  <span class="t-red">52</span>`, g.vol, vol],
    [`Force Index Cumulative 9MA crossover: <i class="key t-red"></i>`, null, cross],
    [`Force Index:  <span class="t-blue">10 Sum</span>     Force Index Cumulative 9MA: <i class="under"></i>`, g.force, force]
  ].map(([cap, grid, body], n) => {
    const top = e[n], h = e[n+1] - top - 1;
    const v = d.vlines.map(x => box(x, top + 15, 1, h - 15, "#e1e1e1")).join("");
    const scale = grid ? gridRows(grid).map(([val, y, m]) => {
      const label = m ? grid.fmt(val) : "";
      return box(0, y, m ? 2 : 1, 1, "#555") + (label ? `<text x="4" y="${y + 4}">${label}</text>` : "");
    }).join("") : "";
    return `<div class="pane d-flex"><div class="plotarea flex-grow-1"><div class="caption">${cap}</div>
      <svg height="${h - 15}" viewBox="0 ${top + 15} ${W} ${h - 15}" preserveAspectRatio="none">${v}${grid ? gridSvg(grid) : ""}${body}</svg></div>
      <div class="scale"><svg width="59" height="${h}" viewBox="0 ${top} 59 ${h}">${scale}<path d="M52 ${top + 3}h5l-2.500 3z"/></svg></div></div>`;
  }).join("");
}
const cells = list => list.map(([x, t], i) => `<span style="width:${((list[i+1] ? list[i+1][0] : W) - x) / W * 100}%">${t}</span>`).join("");

for (const d of [weekly, daily]) {
  const node = document.getElementById("windowTpl").content.cloneNode(true);
  const q = s => node.querySelector(s);
  q(".win").classList.add(d.front ? "win-front" : "win-back");
  q("[data-title]").textContent = d.title;
  q("[data-period]").textContent = d.period;
  q("[data-names]").innerHTML = symbols.map(s => `<a href="#" class="list-group-item${s === "IWM" ? " active" : ""}">${s.replace("&", "&amp;")}</a>`).join("");
  const gaps = [10, 23, 23, 10, 0];
  q("[data-quote]").innerHTML = d.quote.map((t, i) => `<span style="margin-right:${gaps[i]}px">${t}</span>`).join("");
  q("[data-panes]").innerHTML = panes(d);
  q("[data-months]").innerHTML = cells(d.months);
  q("[data-years]").innerHTML = cells(d.years);
  q("[data-thumb]").style.width = d.thumb + "px";
  document.getElementById("desk").append(node);
}
</script>
</body>
</html>
